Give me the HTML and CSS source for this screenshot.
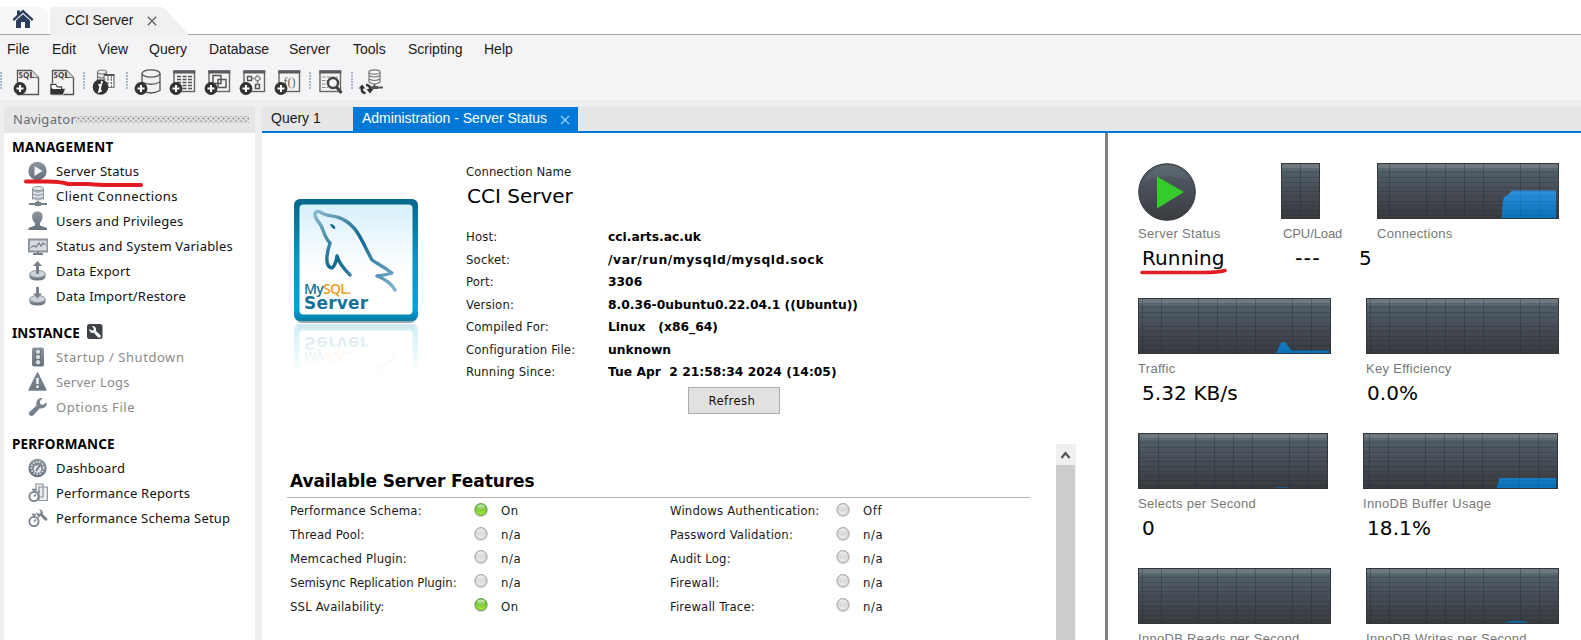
FILE: index.html
```html
<!DOCTYPE html>
<html lang="en">
<head>
<meta charset="utf-8">
<title>CCI Server</title>
<link rel="stylesheet" href="styles.css">
</head>
<body>
<svg class="defs" width="0" height="0" aria-hidden="true">
  <defs>
    <linearGradient id="steel" x1="0" y1="0" x2="0" y2="1"><stop offset="0" stop-color="#8d959d"/><stop offset="1" stop-color="#66717d"/></linearGradient>
    <linearGradient id="dark" x1="0" y1="0" x2="0" y2="1"><stop offset="0" stop-color="#53616a"/><stop offset=".5" stop-color="#484d56"/><stop offset="1" stop-color="#383c3f"/></linearGradient>
    <linearGradient id="area" gradientUnits="userSpaceOnUse" x1="0" y1="27" x2="0" y2="56"><stop offset="0" stop-color="#2d8fdb"/><stop offset="1" stop-color="#0670b5"/></linearGradient>
    <linearGradient id="on" x1="0" y1="0" x2="0" y2="1"><stop offset="0" stop-color="#55ad2c"/><stop offset="1" stop-color="#a9ea3b"/></linearGradient>
    <linearGradient id="off" x1="0" y1="0" x2="0" y2="1"><stop offset="0" stop-color="#c4c4c4"/><stop offset="1" stop-color="#eeeeee"/></linearGradient>
    <linearGradient id="gloss" x1="0" y1="0" x2="0" y2="1"><stop offset="0" stop-color="#fff" stop-opacity=".75"/><stop offset="1" stop-color="#fff" stop-opacity=".1"/></linearGradient>
    <g id="plus"><circle cx="6" cy="19.5" r="6.4" fill="#333"/><path d="M6 16v7M2.500 19.500h7" stroke="#fff" stroke-width="2"/></g>
    <g id="sheet"><path d="M3.500 1.500h14l7 7v17H3.500z" fill="#f4f4f4" stroke="#555" stroke-width="1.300"/><path d="M17.500 1.500v7h7" fill="#ddd" stroke="#777"/><text x="4.500" y="9.300" class="sql">SQL</text></g>
    <g id="window"><rect x="4" y="2" width="20.500" height="20.500" fill="#f6f4f2" stroke="#666" stroke-width="1.400"/><path d="M3.300 3h22" stroke="#555a5c" stroke-width="3"/></g>
    <g id="led-on"><circle cx="8" cy="8.500" r="6.800" fill="#d5d5d5"/><circle cx="8" cy="7.500" r="6" fill="url(#on)" stroke="#5a9146" stroke-width=".8"/><ellipse cx="8" cy="5" rx="4" ry="2.600" fill="url(#gloss)"/></g>
    <g id="led-off"><circle cx="8" cy="8.500" r="6.800" fill="#dedede"/><circle cx="8" cy="7.500" r="6" fill="url(#off)" stroke="#a2a2a2" stroke-width=".9"/><ellipse cx="8" cy="5" rx="4" ry="2.600" fill="url(#gloss)"/></g>
    <g id="stopwatch"><circle cx="6" cy="13.500" r="4.600" fill="#fff" stroke="#77818c" stroke-width="1.800"/><path d="M4 6.500h4M6 7v2M10 8l1.500 1M6 13.500l2-2" stroke="#77818c" stroke-width="1.600"/></g>
    <path id="wrench" d="M1.500 15l7-6.500c-1-4 1.500-8 6-7.500L11.800 4.200l.5 3 3 .5 3.500-2.500c.5 4-3 7-7 6l-6.300 7c-2.500 2-6-.5-4-3.200z"/>
  </defs>
</svg>

<header class="tabs">
  <div class="home-tab">
    <svg width="22" height="20" viewBox="0 0 22 20"><path d="M11 .5l10.500 9.800-1.500 1.600L11 3.800l-9 8.100L.500 10.300 5 6V1.500h3v1.700z" fill="#2c3e60"/><path d="M4 11.500l7-6.300 7 6.300V19h-5v-6H9v6H4z" fill="#2c3e60"/></svg>
  </div>
  <div class="conn-tab">
    <svg class="conn-shape" width="140" height="28" viewBox="0 0 140 28"><path d="M0 28V5q0-5 5-5h105q4 0 8 5l20 22v1z" fill="#f0f0f2"/></svg>
    <span class="conn-name">CCI Server</span>
    <svg class="conn-close" width="10" height="10" viewBox="0 0 10 10"><path d="M.8.8l8.400 8.400M9.200.8L.8 9.200" stroke="#666" stroke-width="1.400"/></svg>
  </div>
</header>

<nav class="menu"><span>File</span><span>Edit</span><span>View</span><span>Query</span><span>Database</span><span>Server</span><span>Tools</span><span>Scripting</span><span>Help</span></nav>

<div class="toolbar">
  <i class="grip first"></i>
  <svg class="tool" viewBox="0 0 27 27"><use href="#sheet"/><use href="#plus"/></svg>
  <svg class="tool" viewBox="0 0 27 27"><use href="#sheet"/><path d="M1 26V14.500h6l1.500 2.500h5v2.500h3L14 26z" fill="#333" stroke="#fff" stroke-width=".6"/><path d="M2.500 19v-3h4l1.500 2.500h4v1.500H4z" fill="#fff"/></svg>
  <i class="grip a"></i>
  <svg class="tool" viewBox="0 0 27 27"><g fill="#eee" stroke="#777" stroke-width="1.200"><path d="M5.500 3v9h9V3"/><ellipse cx="10" cy="3" rx="4.500" ry="2"/><path d="M5.500 7.500q4.500 3 9 0"/><path d="M12 6.500h10v12H12z" fill="#fff"/><path d="M12 10h10M12 14h10M16 7v11M19.500 7v11" stroke-dasharray="2 1"/></g><path d="M12 6h10.500" stroke="#555" stroke-width="2"/><circle cx="8.500" cy="18" r="7.800" fill="#333"/><path d="M10 12l-.3 2M6.500 16.500l2.500-1-1.800 7 2.500-1.200" stroke="#fff" stroke-width="2" fill="none"/></svg>
  <i class="grip b"></i>
  <svg class="tool" viewBox="0 0 27 27"><g fill="#f2f1f0" stroke="#555" stroke-width="1.300"><path d="M7 4.500v17q9 5 18 0v-17"/><ellipse cx="16" cy="4.500" rx="9" ry="3.600"/><path d="M7 13q9 4.500 18 0" fill="none"/></g><use href="#plus"/></svg>
  <svg class="tool" viewBox="0 0 27 27"><use href="#window"/><path d="M7 7.500h15M7 10.500h15M7 13.500h15M7 16.500h15M7 19.500h15" stroke="#555" stroke-width="1.300" stroke-dasharray="4 1.500"/><use href="#plus"/></svg>
  <svg class="tool" viewBox="0 0 27 27"><use href="#window"/><path d="M8 6.500h8v8H8zM13 10.500h8v8h-8z" fill="none" stroke="#555" stroke-width="1.500"/><use href="#plus"/></svg>
  <svg class="tool" viewBox="0 0 27 27"><use href="#window"/><g fill="none" stroke="#555" stroke-width="1.400"><path d="M7.500 7.500h4v4h-4zM15.500 15.500h4v4h-4z"/><path d="M17.500 6.500l3 3-3 3-3-3zM11.500 9.500h3M17.500 12.500v3" stroke="#888"/></g><use href="#plus"/></svg>
  <svg class="tool" viewBox="0 0 27 27"><use href="#window"/><text x="8.500" y="17" class="fn">f()</text><use href="#plus"/></svg>
  <i class="grip c"></i>
  <svg class="tool" viewBox="0 0 27 27"><rect x="3" y="2" width="20.500" height="20.500" fill="#f6f4f2" stroke="#666" stroke-width="1.400"/><path d="M2.300 3h22" stroke="#555a5c" stroke-width="3"/><path d="M5 8h16M5 11.500h16M5 15h6M5 18.500h6" stroke="#888" stroke-width="1.200" stroke-dasharray="3.500 1.200"/><circle cx="16" cy="14" r="5" fill="#f4f4f4" stroke="#444" stroke-width="2.400"/><path d="M19.500 18l5 6" stroke="#444" stroke-width="3"/></svg>
  <i class="grip d"></i>
  <svg class="tool" viewBox="0 0 27 27"><g fill="#f4f4f4" stroke="#777" stroke-width="1.200"><path d="M10 3v10q5.500 4 11 0V3"/><ellipse cx="15.500" cy="3" rx="5.500" ry="2.200"/><path d="M10 6.500q5.500 3 11 0M10 10q5.500 3 11 0"/></g><path d="M15.500 15v3M12 18.500h12" stroke="#555" stroke-width="1.800"/><path d="M13 18.500h6" stroke="#555" stroke-width="3"/><path d="M6.500 24C3 24 2.500 21.500 3 18.500M7 16c3.500 0 4.500 2.500 4 5" fill="none" stroke="#333" stroke-width="2.600"/><path d="M-.5 19.500l3.500-4 3.500 4zM7.500 20l3.500 4.500 3.500-4.500z" fill="#333"/></svg>
</div>

<div class="work">
  <aside class="navigator">
    <div class="nav-head"><span>Navigator</span><i class="dots"></i></div>
    <div class="nav-body">
      <h2>MANAGEMENT</h2>
      <ul>
        <li><svg viewBox="0 0 20 20"><circle cx="9.500" cy="10" r="9.200" fill="url(#steel)"/><path d="M6.500 5l8 5-8 5z" fill="#f2f4f5"/></svg>Server Status</li>
        <li class="loose"><svg viewBox="0 0 20 20"><path d="M4.500 2.500v11q5.500 3 11 0v-11" fill="#aab1b8"/><ellipse cx="10" cy="2.500" rx="5.500" ry="2" fill="#e6e8ea" stroke="#8d959d"/><path d="M4.500 6q5.500 3 11 0M4.500 9.500q5.500 3 11 0M4.500 13.500q5.500 3 11 0" fill="none" stroke="#f0f1f2" stroke-width="1.200"/><path d="M4.500 2.500v11M15.500 2.500v11" stroke="#8d959d"/><path d="M10 15v3M1 18h18" stroke="#77818c" stroke-width="2.200"/><path d="M7 18h6" stroke="#77818c" stroke-width="4"/></svg>Client Connections</li>
        <li><svg viewBox="0 0 20 20"><path d="M9.500.5c4 0 5.500 2.500 5 6-.4 3-1.500 4-2.500 5.500v2.500l7 2.500v2H.500v-2l6.500-2.500V12C5.500 10.500 4.500 9.500 4.200 6.500c-.4-3.500 1.300-6 5.300-6z" fill="url(#steel)"/></svg>Users and Privileges</li>
        <li><svg viewBox="0 0 20 20"><rect x="1" y="3.500" width="18.500" height="12" fill="#d7dbde" stroke="#8d959d" stroke-width="2"/><path d="M3 11.500l3-2 2 1.500 3-4 2 3 2-3 2.500 2" fill="none" stroke="#77818c" stroke-width="1.300"/><path d="M10 15.500v2.500M5 18h10" stroke="#77818c" stroke-width="1.800"/></svg>Status and System Variables</li>
        <li><svg viewBox="0 0 20 20"><path d="M1.500 13v2.500q0 4 8 4t8-4V13z" fill="url(#steel)"/><ellipse cx="9.500" cy="13" rx="7.800" ry="3.500" fill="#cfd3d7" stroke="#8d959d"/><path d="M9.500 0l4.500 5h-3v8H8V5H5z" fill="#77818c"/></svg>Data Export</li>
        <li><svg viewBox="0 0 20 20"><path d="M1.500 13v2.500q0 4 8 4t8-4V13z" fill="url(#steel)"/><ellipse cx="9.500" cy="13" rx="7.800" ry="3.500" fill="#cfd3d7" stroke="#8d959d"/><path d="M9.500 12.500L5 7.500h3V1h3v6.500h3z" fill="#77818c"/></svg>Data Import/Restore</li>
      </ul>
      <h2 class="instance">INSTANCE <svg viewBox="0 0 16 16"><rect width="15.500" height="15" rx="2.500" fill="#3f4347"/><g transform="translate(14.500 1.500) scale(-.65 .65)"><use href="#wrench" fill="#fff"/></g></svg></h2>
      <ul class="disabled">
        <li class="looser"><svg viewBox="0 0 20 20"><rect x="4" y=".5" width="12" height="19" rx="2" fill="url(#steel)"/><rect x="7" y="2" width="6" height="16" rx="2" fill="#66717d"/><g fill="#d7dbde"><circle cx="10" cy="4.800" r="2.200"/><circle cx="10" cy="10" r="2.200"/><circle cx="10" cy="15.200" r="2.200"/></g></svg>Startup / Shutdown</li>
        <li><svg viewBox="0 0 20 20"><path d="M9.500 1L18 18H1z" fill="url(#steel)" stroke="#77818c" stroke-width="1.500" stroke-linejoin="round"/><path d="M9.500 6v6M9.500 13.500v2.500" stroke="#fff" stroke-width="2.200"/></svg>Server Logs</li>
        <li class="looser"><svg viewBox="0 0 20 20"><use href="#wrench" fill="#77818c"/></svg>Options File</li>
      </ul>
      <h2 class="perf">PERFORMANCE</h2>
      <ul>
        <li><svg viewBox="0 0 20 20"><circle cx="9.500" cy="10" r="9.200" fill="url(#steel)"/><circle cx="9.500" cy="10" r="6.200" fill="none" stroke="#e3e6e8" stroke-width="1.800" stroke-dasharray="1.500 1.500"/><circle cx="9.500" cy="11" r="3.800" fill="#e3e6e8"/><path d="M8 13l5-7.500" stroke="#77818c" stroke-width="2"/></svg>Dashboard</li>
        <li><svg viewBox="0 0 20 20"><g fill="#eceef0" stroke="#8d959d" stroke-width="1.200"><path d="M8 1h7v13H8zM11 4h8.500v13.500H11z"/></g><use href="#stopwatch"/></svg>Performance Reports</li>
        <li><svg viewBox="0 0 20 20"><use href="#wrench" fill="#77818c" transform="translate(20 1) scale(-.62 .62)"/><use href="#stopwatch"/></svg>Performance Schema Setup</li>
      </ul>
      <svg class="mark-status" width="120" height="10" viewBox="0 0 120 10"><path d="M2 2.500h22q12 0 20 2.500h20q12 1 20 1h33" fill="none" stroke="#e31b23" stroke-width="4" stroke-linecap="round"/></svg>
    </div>
  </aside>

  <main class="main">
    <div class="doc-tabs">
      <span class="doc-tab">Query 1</span>
      <span class="doc-tab active">Administration - Server Status<svg width="10" height="10" viewBox="0 0 10 10"><path d="M1 1l8 8M9 1L1 9" stroke="#9fd0f5" stroke-width="1.200"/></svg></span>
    </div>
    <div class="content">
      <div class="left">
        <section class="info">
          <svg class="logo" width="130" height="184" viewBox="0 0 130 184">
            <defs>
              <linearGradient id="frame" x1="0" y1="0" x2="0" y2="1"><stop offset="0" stop-color="#05678a"/><stop offset=".5" stop-color="#0a96c4"/><stop offset=".9" stop-color="#00a5d8"/><stop offset="1" stop-color="#077da4"/></linearGradient>
              <linearGradient id="paper" x1="0" y1="0" x2="0" y2="1"><stop offset="0" stop-color="#d9f0fb"/><stop offset=".6" stop-color="#fff"/></linearGradient>
              <linearGradient id="fish" x1="0" y1="0" x2="1" y2="1"><stop offset="0" stop-color="#8cb8cd"/><stop offset=".45" stop-color="#10688f"/><stop offset="1" stop-color="#7fb2cb"/></linearGradient>
              <linearGradient id="fade" x1="0" y1="1" x2="0" y2="0"><stop offset="0" stop-color="#fff" stop-opacity=".2"/><stop offset=".42" stop-color="#fff" stop-opacity="0"/></linearGradient>
              <mask id="reflect"><rect width="130" height="126" fill="url(#fade)"/></mask>
              <g id="badge">
                <rect x="1" y="1" width="124" height="122" rx="6" fill="url(#frame)"/>
                <rect x="6.500" y="6.500" width="113" height="110" rx="4" fill="url(#paper)"/>
                <g fill="none" stroke="url(#fish)" stroke-width="3.400" stroke-linejoin="round" stroke-linecap="round">
                  <path d="M57 77C50 70 46 65 44 58C43 63 43 67 39 70C32 69 33 57 37 45C30 38 31 29 24 22C19 14 24 12 29 15C33 18 38 17 44 19C64 25 68 42 79 62C83 65 90 68 99 75C94 77 90 77 84 78C92 81 98 85 102 92"/>
                </g>
                <path d="M37 26q5 0 5.500 5-4 0-5.500-5z" fill="#10688f"/>
                <text x="11" y="95.500" class="logo-my">My<tspan class="logo-sql">SQL.</tspan></text>
                <text x="11" y="110.500" class="logo-server">Server</text>
              </g>
            </defs>
            <rect x="2" y="4" width="122" height="121" rx="7" fill="#99a6ab"/>
            <use href="#badge"/>
            <g transform="matrix(1 0 0 -1 0 249)"><use href="#badge" mask="url(#reflect)"/></g>
          </svg>
          <div class="details">
            <div class="cap">Connection Name</div>
            <div class="conn">CCI Server</div>
            <dl>
              <dt>Host:</dt><dd>cci.arts.ac.uk</dd>
              <dt>Socket:</dt><dd class="wide">/var/run/mysqld/mysqld.sock</dd>
              <dt>Port:</dt><dd>3306</dd>
              <dt>Version:</dt><dd>8.0.36-0ubuntu0.22.04.1 ((Ubuntu))</dd>
              <dt>Compiled For:</dt><dd>Linux&nbsp;&nbsp; (x86_64)</dd>
              <dt>Configuration File:</dt><dd>unknown</dd>
              <dt>Running Since:</dt><dd>Tue Apr&nbsp; 2 21:58:34 2024 (14:05)</dd>
            </dl>
            <button class="refresh" type="button">Refresh</button>
          </div>
        </section>
        <section class="features">
          <div class="feature-list">
            <h1>Available Server Features</h1>
            <div class="grid">
              <span>Performance Schema:</span><svg viewBox="0 0 16 16"><use href="#led-on"/></svg><span class="val">On</span>
              <span>Windows Authentication:</span><svg viewBox="0 0 16 16"><use href="#led-off"/></svg><span class="val">Off</span>
              <span>Thread Pool:</span><svg viewBox="0 0 16 16"><use href="#led-off"/></svg><span class="val">n/a</span>
              <span>Password Validation:</span><svg viewBox="0 0 16 16"><use href="#led-off"/></svg><span class="val">n/a</span>
              <span>Memcached Plugin:</span><svg viewBox="0 0 16 16"><use href="#led-off"/></svg><span class="val">n/a</span>
              <span>Audit Log:</span><svg viewBox="0 0 16 16"><use href="#led-off"/></svg><span class="val">n/a</span>
              <span class="tight">Semisync Replication Plugin:</span><svg viewBox="0 0 16 16"><use href="#led-off"/></svg><span class="val">n/a</span>
              <span>Firewall:</span><svg viewBox="0 0 16 16"><use href="#led-off"/></svg><span class="val">n/a</span>
              <span>SSL Availability:</span><svg viewBox="0 0 16 16"><use href="#led-on"/></svg><span class="val">On</span>
              <span>Firewall Trace:</span><svg viewBox="0 0 16 16"><use href="#led-off"/></svg><span class="val">n/a</span>
            </div>
          </div>
          <div class="scroll"><svg width="20" height="21" viewBox="0 0 20 21"><path d="M5.500 14l4-5 4 5" fill="none" stroke="#555" stroke-width="2.200"/></svg><i class="thumb"></i></div>
        </section>
      </div>

      <section class="monitor">
        <div class="row top">
          <div class="meter">
            <svg width="58" height="58" viewBox="0 0 58 58"><circle cx="29" cy="29" r="28.300" fill="url(#dark)" stroke="#33373a"/><path d="M6 18a25 25 0 0 1 46 0q-23-9-46 0z" fill="#fff" opacity=".06"/><path d="M19 13.500v32L46 29z" fill="#35cb2a"/></svg>
            <label>Server Status</label><b>Running</b>
            <svg class="mark-running" width="90" height="10" viewBox="0 0 90 10"><path d="M2 4.500h62q14 0 21-2" fill="none" stroke="#e31b23" stroke-width="3.600" stroke-linecap="round"/></svg>
          </div>
          <div class="meter cpu"><div class="chart"></div><label>CPU/Load</label><b>---</b></div>
          <div class="meter conns"><div class="chart"><svg width="181" height="56" viewBox="0 0 181 56"><path d="M123.500 54l1-14 1.500-7 4-2 4-4.500H178V54z" fill="url(#area)"/></svg></div><label>Connections</label><b>5</b></div>
        </div>
        <div class="row">
          <div class="meter"><div class="chart"><svg width="193" height="56" viewBox="0 0 193 56"><path d="M136 54c4-2 4-11 8-11s5 6 9 8.500h37V54z" fill="url(#area)"/></svg></div><label>Traffic</label><b>5.32 KB/s</b></div>
          <div class="meter"><div class="chart"></div><label>Key Efficiency</label><b class="near">0.0%</b></div>
        </div>
        <div class="row wide">
          <div class="meter"><div class="chart"><svg width="191" height="56" viewBox="0 0 191 56"><path d="M134 54q8-2 17 0z" fill="#176396"/></svg></div><label>Selects per Second</label><b>0</b></div>
          <div class="meter"><div class="chart"><svg width="195" height="56" viewBox="0 0 195 56"><path d="M132.500 54l3-10H192v10z" fill="url(#area)"/></svg></div><label>InnoDB Buffer Usage</label><b>18.1%</b></div>
        </div>
        <div class="row">
          <div class="meter"><div class="chart"></div><label>InnoDB Reads per Second</label></div>
          <div class="meter"><div class="chart"><svg width="193" height="56" viewBox="0 0 193 56"><path d="M137 54q4-2.500 12-2.500T162 54z" fill="#176396"/></svg></div><label>InnoDB Writes per Second</label></div>
        </div>
      </section>
    </div>
  </main>
</div>
</body>
</html>
```
FILE: styles.css
```css
* { box-sizing: border-box; }

body {
  margin: 0;
  width: 1581px;
  height: 640px;
  overflow: hidden;
  display: flex;
  flex-direction: column;
  background: #eeeef0;
  color: #1a1a1a;
  font: 14px "Liberation Sans", Arial, sans-serif;
}

svg { display: block; flex: none; }
.defs { position: absolute; }

/* Connection tabs */
.tabs {
  flex: 0 0 35px;
  display: flex;
  align-items: flex-end;
  gap: 2px;
  background: #fff;
  border-bottom: 1px solid #a5a5a5;
}
.home-tab {
  width: 48px;
  height: 27px;
  padding: 2px 0 0 12px;
  background: #f8f8f8;
  border-radius: 0 8px 0 0;
}
.conn-tab {
  position: relative;
  width: 140px;
  height: 27px;
  display: flex;
  padding: 5px 0 0 15px;
}
.conn-shape { position: absolute; left: 0; top: 0; }
.conn-name { position: relative; width: 82px; letter-spacing: -0.1px; }
.conn-close { position: relative; margin-top: 4px; }

/* Menu */
.menu {
  flex: 0 0 29px;
  display: grid;
  grid-template-columns: 45px 46px 51px 60px 80px 64px 55px 76px 60px;
  align-items: center;
  padding: 0 0 2px 7px;
  background: #f4f4f7;
}

/* Toolbar */
.toolbar {
  flex: 0 0 36px;
  display: flex;
  align-items: center;
  gap: 8px;
  background: #f4f4f7;
}
.tool { width: 27px; height: 27px; overflow: visible; }
.grip {
  width: 2px;
  height: 18px;
  margin-top: -3px;
  background: repeating-linear-gradient(#a9b8cc 0 2px, transparent 2px 3px);
}
.grip.first { margin-right: 4px; }
.grip.a, .grip.b { margin-left: -1px; margin-right: -1px; }
.grip.c, .grip.d { margin-left: -1px; margin-right: -2px; }
.sql { font: bold 8px "Open Sans", sans-serif; fill: #444; }
.fn { font: 12px "Liberation Serif", serif; fill: #555; }

/* Work area */
.work {
  flex: 1;
  min-height: 0;
  display: flex;
  gap: 7px;
  padding: 7px 0 0 4px;
}
.navigator { flex: 0 0 251px; display: flex; flex-direction: column; font-family: "Noto Sans", sans-serif; }
.nav-head {
  flex: 0 0 26px;
  display: flex;
  align-items: center;
  padding: 0 6px 2px 9px;
  background: #e6e6e6;
  color: #6b6b6b;
  font-size: 13px;
  letter-spacing: 0.3px;
}
.dots {
  flex: 1;
  height: 7px;
  background:
    radial-gradient(circle, #999 0.9px, transparent 1.2px) 0 0 / 5px 5px,
    radial-gradient(circle, #999 0.9px, transparent 1.2px) 2.5px 2.5px / 5px 5px;
}
.nav-body { position: relative; flex: 1; padding-top: 2px; background: #fff; color: #111; }
.nav-body h2 {
  display: flex;
  gap: 7px;
  margin: 0;
  padding-left: 8px;
  font-size: 13.5px;
  line-height: 24px;
  letter-spacing: 0.3px;
  color: #000;
}
.nav-body h2.instance { margin-top: 13px; letter-spacing: 0.1px; }
.nav-body h2.instance svg { width: 16px; height: 16px; margin-top: 3px; }
.nav-body h2.perf { margin-top: 13px; letter-spacing: 0.15px; }
.nav-body ul { position: relative; margin: -1px 0 0; padding: 0 0 0 24px; list-style: none; }
.nav-body li {
  display: flex;
  align-items: center;
  gap: 8px;
  height: 25px;
  font-size: 13px;
  letter-spacing: 0.2px;
}
.nav-body li.loose { letter-spacing: 0.42px; }
.nav-body li.looser { letter-spacing: 0.55px; }
.nav-body li svg { width: 20px; height: 20px; }
.nav-body .disabled { color: #8a8a8a; }
.mark-status { position: absolute; left: 20px; top: 46px; }

/* Documents */
.main { flex: 1; display: flex; flex-direction: column; }
.doc-tabs {
  flex: 0 0 26px;
  display: flex;
  background: #e6e6e6;
  border-bottom: 2px solid #0078d7;
}
.doc-tab { width: 91px; padding-left: 9px; line-height: 22px; }
.doc-tab.active {
  display: flex;
  width: 225px;
  background: #0078d7;
  color: #fff;
  letter-spacing: -0.03px;
}
.doc-tab.active svg { margin: 8px 0 0 13px; }

.content { flex: 1; display: flex; background: #fff; min-height: 0; font-family: "DejaVu Sans Condensed", "DejaVu Sans", sans-serif; }
.left { flex: 0 0 843px; display: flex; flex-direction: column; }
.info { display: flex; height: 311px; padding: 29px 0 0 31px; }
.logo { margin-top: 36px; }
.logo-my { font: 600 14px "Open Sans", sans-serif; fill: #1b7193; letter-spacing: -0.7px; }
.logo-sql { fill: #f29a1c; }
.logo-server { font: bold 17px "DejaVu Sans", sans-serif; fill: #15739b; letter-spacing: 0.2px; }
.details { width: 420px; margin-left: 43px; font-size: 13px; letter-spacing: 0.15px; }
.cap { line-height: 20px; letter-spacing: 0.05px; }
.conn { padding-left: 1px; font: 20px/28px "DejaVu Sans", sans-serif; letter-spacing: 0; color: #000; }
.details dl {
  display: grid;
  grid-template-columns: 142px 1fr;
  grid-auto-rows: 22.5px;
  line-height: 22.5px;
  margin: 16px 0 0;
}
.details dd {
  margin: 0;
  font: bold 12.3px/22.5px "DejaVu Sans", sans-serif;
  letter-spacing: 0;
  color: #000;
  white-space: nowrap;
}
.details dd.wide { letter-spacing: 0.6px; }
.refresh {
  display: block;
  width: 92px;
  height: 27px;
  margin: 3px 0 0 222px;
  padding: 0 4px 0 0;
  background: #e1e1e1;
  border: 1px solid #adadad;
  font: inherit;
  letter-spacing: 0.4px;
  color: #111;
}

.features { flex: 1; display: flex; padding-left: 25px; min-height: 0; }
.feature-list { width: 744px; padding-top: 20px; }
.feature-list h1 {
  margin: 0;
  width: 743px;
  height: 34px;
  padding-left: 3px;
  border-bottom: 1px solid #b4b4b4;
  font: bold 17px/34px "DejaVu Sans", sans-serif;
  letter-spacing: -0.1px;
  color: #000;
}
.grid {
  display: grid;
  grid-template-columns: 183px 16px 181px 165px 16px 80px;
  grid-auto-rows: 23.8px;
  align-items: center;
  padding: 1px 0 0 3px;
  font-size: 13px;
  letter-spacing: 0.16px;
  white-space: nowrap;
}
.grid svg { width: 16px; height: 16px; margin-top: -2px; }
.grid .val { padding-left: 12px; letter-spacing: 0.6px; }
.grid .tight { letter-spacing: -0.05px; }
.scroll { width: 20px; margin-left: 25px; background: #f0f0f0; }
.thumb { display: block; width: 19px; height: 200px; background: #cdcdcd; }

/* Monitor column */
.monitor {
  flex: 1;
  border-left: 3px solid #808080;
  padding: 30px 0 0 30px;
  display: flex;
  flex-direction: column;
}
.row { display: flex; flex: 0 0 135px; gap: 35px; }
.meter { position: relative; width: 193px; }
.row.wide .meter { width: 190px; }
.row.wide .meter + .meter { width: 195px; }
.meter label {
  display: block;
  margin-top: 5px;
  font: 13px/20px "Liberation Sans", Arial, sans-serif;
  letter-spacing: 0.3px;
  color: #777;
  white-space: nowrap;
}
.meter b {
  display: block;
  padding-left: 4px;
  font: 20px/28px "DejaVu Sans", sans-serif;
  letter-spacing: 0.1px;
  color: #000;
}
.meter b.near { padding-left: 1px; }
.chart {
  position: relative;
  height: 56px;
  border: 1px solid #33373a;
  background:
    repeating-linear-gradient(to left, transparent 0 18px, rgba(25, 30, 35, 0.22) 18px 18.8px),
    repeating-linear-gradient(transparent 0 3.700px, rgba(25, 30, 35, 0.13) 3.700px 4.700px),
    linear-gradient(#6d787f 0 5px, #526068 6px, #484d56 50%, #383b3e);
}
.chart::after {
  content: "";
  position: absolute;
  inset: 0;
  background:
    repeating-linear-gradient(to left, transparent 0 18px, rgba(0, 40, 80, 0.12) 18px 18.8px),
    repeating-linear-gradient(transparent 0 3.700px, rgba(0, 40, 80, 0.1) 3.700px 4.700px);
}
.row.top { gap: 0; }
.row.top .meter { width: 143px; }
.row.top .meter > svg:first-child { margin-bottom: -2px; }
.row.top .cpu { width: 96px; }
.cpu .chart { width: 39px; }
.cpu label { padding-left: 2px; letter-spacing: -0.1px; }
.cpu b { padding-left: 14px; font-size: 21px; letter-spacing: 1px; }
.row.top .conns { width: 182px; }
.conns b { margin-left: -22px; }
.mark-running { position: absolute; left: 2px; top: 105px; }
```
